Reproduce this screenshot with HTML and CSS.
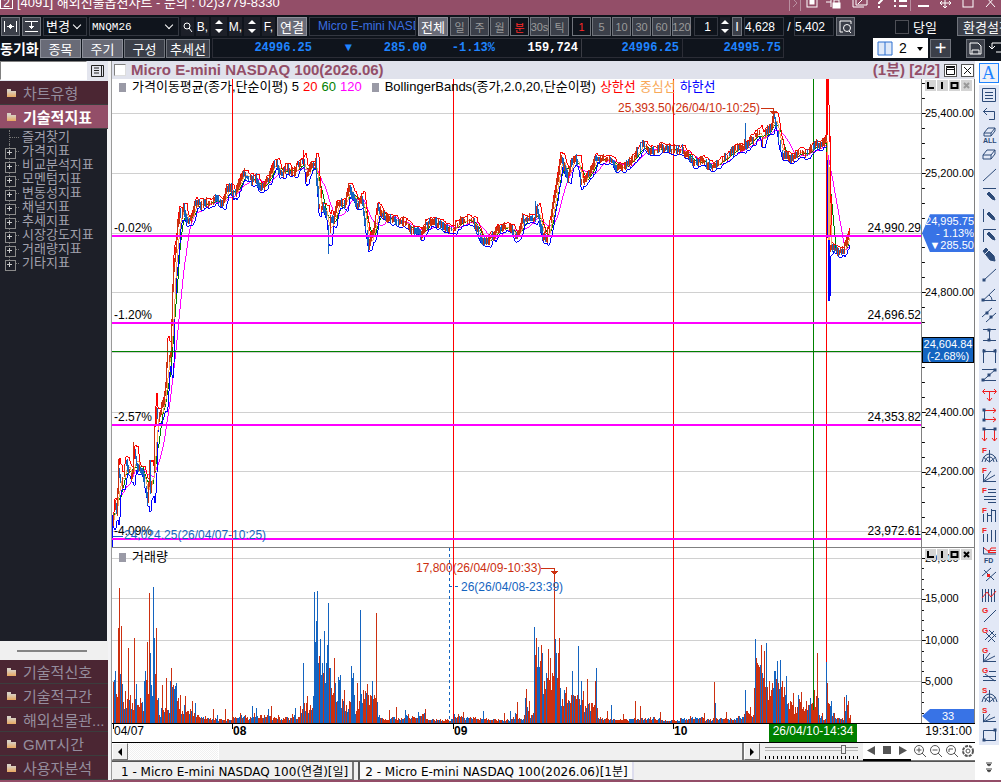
FILE: index.html
```html
<!DOCTYPE html>
<html lang="ko">
<head>
<meta charset="utf-8">
<title>해외선물옵션차트</title>
<link rel="stylesheet" href="styles.css">
</head>
<body>

<header class="titlebar">
  <span class="badge">2</span>
  <span class="title-text">[4091] 해외선물옵션차트 - 문의 : 02)3779-8330</span>
  <svg class="title-icons" width="216" height="16" viewBox="0 0 216 16">
    <path d="M4.500 0v11M15.500 0v11" class="dim"/>
    <path d="M8 -1l4 4-4 4" class="dim"/>
    <rect x="22" y="-3" width="10" height="10"/><rect x="25" y="0" width="4" height="4" class="fill"/>
    <path d="M46 -2v9M46 2h-5M49 3v-3h5v3"/><rect x="48" y="3" width="7" height="5" class="fill"/>
    <path d="M68 -3v10h11M71 -4h11v9h-11zM73 4l5-5"/>
    <path d="M91 0c0-5 7-4 6 0l-3 3v1M94 6v2" class="bold"/>
    <path d="M109 1h2M109 6h2M114 1h8M114 6h8" class="bold"/>
    <path d="M125.500 0v11" class="dim"/>
    <path d="M133 6h11" class="bold"/>
    <path d="M160 -4v11M155 3h11M157 1l-2 2 2 2M164 1l2 2-2 2M158 6l2 2 2-2"/>
    <rect x="178" y="-3" width="10" height="10"/>
    <path d="M201 -3l9 10M210 -3l-9 10"/>
  </svg>
</header>

<nav class="toolbar">
  <button class="btn sq" aria-label="폭"><svg width="15" height="15" viewBox="0 0 15 15"><path d="M1.500 2v11M13.500 2v11M4 7.500h7M7.500 5v5M6.500 6v3M8.500 6v3"/></svg></button>
  <button class="btn sq" aria-label="높이"><svg width="15" height="15" viewBox="0 0 15 15"><path d="M1 2.500h13M1 12.500h13M7.500 3v7M5 7.500h5M6 8.500h3"/></svg></button>
  <span class="pick w-change"><select aria-label="변경"><option>변경</option></select></span>
  <span class="pick w-code"><select class="mono" aria-label="종목코드"><option>MNQM26</option></select></span>
  <button class="flat" aria-label="검색"><svg width="12" height="12" viewBox="0 0 12 12"><circle cx="5" cy="5" r="3"/><path d="M7 7l3 4"/></svg></button>
  <button class="flat">B,</button>
  <button class="flat spin" aria-label="B 이동"><i class="up"></i><i class="down"></i></button>
  <button class="flat">M,</button>
  <button class="flat spin" aria-label="M 이동"><i class="up"></i><i class="down"></i></button>
  <button class="flat">F,</button>
  <button class="btn lit w-link">연결</button>
  <span class="field name">Micro E-mini NASDAQ</span>
  <button class="btn lit w-link">전체</button>
  <div class="group">
    <button class="btn per">일</button>
    <button class="btn per">주</button>
    <button class="btn per">월</button>
    <button class="btn per on">분</button>
    <button class="btn per">30s</button>
    <button class="btn per">틱</button>
  </div>
  <div class="group">
    <button class="btn per on">1</button>
    <button class="btn per">5</button>
    <button class="btn per">10</button>
    <button class="btn per">30</button>
    <button class="btn per">60</button>
    <button class="btn per">120</button>
  </div>
  <input class="field w-unit" value="1" aria-label="분 단위">
  <button class="flat spin narrow" aria-label="단위 조절"><i class="up"></i><i class="down"></i></button>
  <button class="btn bar" aria-label="구분">I</button>
  <input class="field w-count" value="4,628" aria-label="표시 개수">
  <span class="slash">/</span>
  <input class="field w-count" value="5,402" aria-label="전체 개수">
  <button class="btn sq" aria-label="조회"><svg width="15" height="15" viewBox="0 0 15 15"><path d="M5 13H2V2h11v3"/><circle cx="9" cy="9" r="3.500"/><path d="M11 12l2 2"/></svg></button>
  <label class="today"><input type="checkbox">당일</label>
  <button class="btn w-env">환경설정</button>
</nav>

<div class="toolbar second">
  <b class="sync">동기화</b>
  <div class="modes">
    <button class="btn lit">종목</button>
    <button class="btn lit">주기</button>
    <button class="btn">구성</button>
    <button class="btn">추세선</button>
  </div>
  <div class="quote">
    <span class="q-last">24996.25</span>
    <span class="q-dir">▼</span>
    <span class="q-diff">285.00</span>
    <span class="q-rate">-1.13%</span>
    <span class="q-vol">159,724</span>
    <span class="q-ask">24996.25</span>
    <span class="q-bid">24995.75</span>
  </div>
  <span class="layout-pick">
    <svg width="16" height="15" viewBox="0 0 16 15"><path d="M1 1h14v13H1zM8 1v13"/></svg>
    <select aria-label="화면 분할"><option>2</option></select>
  </span>
  <button class="btn add">+</button>
  <button class="btn sq save" aria-label="저장"><svg width="15" height="15" viewBox="0 0 15 15"><path d="M2 2h8l3 3v8H2zM4 13V9h7v4"/></svg></button>
  <button class="flat swap" aria-label="불러오기"><svg width="14" height="14" viewBox="0 0 14 14"><path d="M3 2v6M0 5l3 3 3-3M3 2h11M7 11h7"/></svg></button>
</div>

<main class="work">
  <aside class="side">
    <div class="find">
      <input type="text" aria-label="지표 검색">
      <button aria-label="목록"><svg width="13" height="12" viewBox="0 0 13 12"><path d="M.5.5h12v11H.5zM3 3h5M3 5.500h5M3 8h5M10.500 1v10"/></svg></button>
    </div>
    <button class="fold">차트유형</button>
    <button class="fold active">기술적지표</button>
    <ul class="tree">
      <li class="leaf">즐겨찾기</li>
      <li>가격지표</li>
      <li>비교분석지표</li>
      <li>모멘텀지표</li>
      <li>변동성지표</li>
      <li>채널지표</li>
      <li>추세지표</li>
      <li>시장강도지표</li>
      <li>거래량지표</li>
      <li>기타지표</li>
    </ul>
    <div class="splitter"></div>
    <button class="fold">기술적신호</button>
    <button class="fold">기술적구간</button>
    <button class="fold">해외선물관...</button>
    <button class="fold">GMT시간</button>
    <button class="fold">사용자분석</button>
  </aside>

  <section class="chart">
    <div class="chart-head">
      <input type="checkbox" aria-label="차트 선택">
      <h1>Micro E-mini NASDAQ 100(2026.06)</h1>
      <span class="page">(1분) [2/2]</span>
      <button aria-label="최대화"><svg width="13" height="13" viewBox="0 0 13 13"><path d="M2.500 3.500h8v7h-8zM2 5.500h9M2 2.500h9"/></svg></button>
      <button aria-label="닫기"><svg width="13" height="13" viewBox="0 0 13 13"><path d="M3 3l7 7M10 3l-7 7"/></svg></button>
    </div>

    <div class="panes">
      <div class="plot" id="plot">
        <svg id="canvas" viewBox="112 79 809 644" preserveAspectRatio="none"></svg>
        <div class="legend price-legend">
          <i></i><span>가격이동평균(종가,단순이평)</span>
          <span>5</span><span class="c-up">20</span><span class="c-green">60</span><span class="c-mag">120</span>
          <i class="second-key"></i><span>BollingerBands(종가,2.0,20,단순이평)</span>
          <span class="c-up">상한선</span><span class="c-mid">중심선</span><span class="c-low">하한선</span>
        </div>
        <div class="legend vol-legend"><i></i><span>거래량</span></div>
      </div>
      <div class="axis" id="axis">
        <svg id="ticks" viewBox="0 79 54 644" preserveAspectRatio="none"></svg>
        <div class="pane-btns top">
          <button aria-label="축"><svg width="11" height="11" viewBox="0 0 11 11"><path d="M3 2v6h6"/></svg></button>
          <button aria-label="구분"><svg width="11" height="11" viewBox="0 0 11 11"><path d="M5 2v7"/></svg></button>
          <button aria-label="확대"><svg width="11" height="11" viewBox="0 0 11 11"><path d="M2.500 3h6v5h-6z"/></svg></button>
          <button class="off" aria-label="제거"><svg width="11" height="11" viewBox="0 0 11 11"><path d="M3 3l5 5M8 3L3 8"/></svg></button>
        </div>
        <div class="pane-btns bottom">
          <button aria-label="축"><svg width="11" height="11" viewBox="0 0 11 11"><path d="M3 2v6h6"/></svg></button>
          <button aria-label="구분"><svg width="11" height="11" viewBox="0 0 11 11"><path d="M5 2v7"/></svg></button>
          <button aria-label="확대"><svg width="11" height="11" viewBox="0 0 11 11"><path d="M2.500 3h6v5h-6z"/></svg></button>
          <button aria-label="제거"><svg width="11" height="11" viewBox="0 0 11 11"><path d="M3 3l5 5M8 3L3 8"/></svg></button>
        </div>
        <div class="tag now">24,995.75<br>- 1.13%<br>▼285.50</div>
        <div class="tag cursor">24,604.84<br>(-2.68%)</div>
        <div class="tag vol">33</div>
      </div>
    </div>

    <div class="dates" id="dates">
      <span class="clock">19:31:00</span>
    </div>

    <div class="scroll">
      <button class="step" aria-label="왼쪽"><i class="left"></i></button>
      <div class="track"></div>
      <div class="thumb"></div>
      <button class="step" aria-label="오른쪽"><i class="right"></i></button>
      <div class="zoom"><input type="range" min="0" max="100" value="86" aria-label="배율"></div>
      <svg class="play" width="48" height="18" viewBox="0 0 48 18"><path d="M12 3v9L4 7.500zM20 3h8v8h-8zM36 3v9l8-4.500z"/><path class="base" d="M0 16h48v2H0z"/></svg>
      <svg class="lens" width="64" height="18" viewBox="0 0 64 18">
        <g><circle cx="8" cy="7" r="4.500"/><path d="M11 10l4 4M5.500 7h5M8 4.500v5"/></g>
        <g><circle cx="24" cy="7" r="4.500"/><path d="M27 10l4 4M21.500 7h5"/></g>
        <g><circle cx="40" cy="7" r="4.500"/><path d="M43 10l4 4M38 9v-3h4"/></g>
        <circle cx="57" cy="8" r="2"/><circle cx="57" cy="8" r="5" class="cog"/>
      </svg>
    </div>

    <div class="tabs">
      <button>1 - Micro E-mini NASDAQ 100(연결)[일]</button>
      <button class="current">2 - Micro E-mini NASDAQ 100(2026.06)[1분]</button>
    </div>
  </section>

  <aside class="tools">
    <button class="text-tool">A</button>
    <div class="tool-list" id="tools"></div>
    <button class="more" aria-label="더보기"><svg width="12" height="12" viewBox="0 0 12 12"><path d="M4 2.500h4L6 4zM4 8.500h4L6 10zM3 1h6M3 7h6"/></svg></button>
  </aside>
</main>
<footer class="foot"></footer>

<script src="chart.js"></script>
</body>
</html>
```

FILE: styles.css
```css
* {
  box-sizing: border-box;
}

body {
  margin: 0;
  height: 100vh;
  display: flex;
  flex-direction: column;
  overflow: hidden;
  background: #0f141c;
  font: 12px "Liberation Sans", "Noto Sans CJK KR", sans-serif;
}

button, input, select {
  font: inherit;
  color: inherit;
  margin: 0;
  padding: 0;
  border: 0;
  border-radius: 0;
  background: none;
}

button {
  display: flex;
  align-items: center;
  justify-content: center;
  white-space: nowrap;
}

svg {
  fill: none;
  stroke: currentColor;
  flex: none;
}

/* title bar */
.titlebar {
  height: 15px;
  flex: none;
  display: flex;
  align-items: flex-start;
  overflow: hidden;
  background: #934e68;
  color: #fff;
}

.badge {
  width: 13px;
  height: 9px;
  border: 1px solid #fff;
  border-top: 0;
  font-size: 12px;
  line-height: 6px;
  text-align: center;
}

.title-text {
  margin-left: 4px;
  font-size: 13px;
  line-height: 6px;
  white-space: nowrap;
}

.title-icons {
  margin-left: auto;
  stroke-width: 1;
}

.title-icons .dim { stroke: #b98fa0; }
.title-icons .bold { stroke-width: 2; }
.title-icons .fill { fill: #fff; }

/* toolbars */
.toolbar {
  height: 23px;
  flex: none;
  display: flex;
  align-items: center;
  gap: 2px;
  padding-left: 1px;
  overflow: hidden;
  color: #fff;
  white-space: nowrap;
}

.toolbar > * { flex: none; }

.btn {
  height: 19px;
  border: 1px solid #70747c;
  background: #3b3f49;
  color: #fff;
  font-size: 13px;
}

.btn.lit {
  background: #696b77;
  border-color: #8d909a;
}

.sq { width: 19px; }

.flat {
  width: 13px;
  height: 19px;
  background: #1d2029;
}

.spin {
  width: 16px;
  flex-direction: column;
  gap: 5px;
}

.spin.narrow { width: 10px; }

.spin i {
  border: 4px solid transparent;
  border-top: 0;
  border-bottom-color: #fff;
}

.spin i.down { transform: rotate(180deg); }

.pick {
  position: relative;
  height: 19px;
  border: 1px solid #343841;
}

.pick select {
  width: 100%;
  height: 17px;
  padding-left: 2px;
  appearance: none;
  font-size: 13px;
}

.pick select.mono { font: 11px "Liberation Mono", monospace; }

.pick::after {
  content: "";
  position: absolute;
  right: 6px;
  top: 4px;
  width: 5px;
  height: 5px;
  border: solid #fff;
  border-width: 0 1px 1px 0;
  transform: rotate(45deg);
}

.w-change { width: 44px; }
.w-code { width: 90px; }
.w-link { width: 30px; }

.field {
  height: 19px;
  border: 1px solid #343841;
  line-height: 17px;
  color: #fff;
}

.name {
  width: 107px;
  padding: 0 3px 0 8px;
  overflow: hidden;
  color: #3a6fe0;
}

.group {
  display: flex;
  gap: 1px;
  margin-right: 1px;
}

.per {
  width: 19px;
  color: #9a9a9a;
  font-size: 11px;
}

.per.on {
  background: #0f141c;
  color: #ff2828;
}

.w-unit {
  width: 24px;
  padding-right: 6px;
  text-align: right;
}

.bar { width: 10px; }
.w-count { width: 40px; }
.slash { width: 6px; text-align: center; }

.today {
  display: flex;
  align-items: center;
  gap: 4px;
  margin: 0 18px 0 38px;
  font-size: 13px;
}

.today input {
  width: 14px;
  height: 14px;
  appearance: none;
  border: 1px solid #4d4f56;
}

.w-env {
  width: 60px;
}

.second {
  padding-left: 0;
  padding-bottom: 3px;
}

.sync {
  width: 38px;
  font-size: 14px;
}

.modes {
  display: grid;
  grid-template-columns: 41px 41px 41px 44px;
  gap: 1px;
}

.quote {
  width: 572px;
  height: 20px;
  display: grid;
  grid-template-columns: 99px 40px 75px 68px 87px 101px 1fr;
  border: 1px solid #2b2d36;
  font: bold 12px/18px "Liberation Mono", monospace;
  color: #1f84ff;
  text-align: right;
}

.q-vol {
  padding-right: 3px;
  color: #fff;
  border-right: 1px solid #3a3c44;
}

.q-ask {
  padding-right: 3px;
  border-right: 1px solid #2b2d36;
}

.q-bid { padding-right: 2px; }

.layout-pick {
  width: 55px;
  height: 20px;
  margin-left: 87px;
  padding-left: 4px;
  display: flex;
  align-items: center;
  gap: 4px;
  background: #fff;
  color: #000;
  position: relative;
}

.layout-pick svg { stroke: #2b6fd0; fill: #dfe9f8; }

.layout-pick select {
  flex: 1;
  appearance: none;
  font-size: 14px;
  padding-left: 2px;
}

.layout-pick::after {
  content: "";
  position: absolute;
  right: 5px;
  top: 9px;
  border: 3px solid transparent;
  border-top: 4px solid #000;
  border-bottom: 0;
}

.add {
  width: 21px;
  font-size: 20px;
}

.save { margin-left: 13px; }
.swap { background: none; margin-left: 2px; }

/* work area */
.work {
  flex: 1;
  min-height: 0;
  display: grid;
  grid-template-columns: 112px 1fr 26px;
  background: #fff;
}

.foot {
  height: 2px;
  flex: none;
  background: #934e68;
}

/* indicator list */
.side {
  display: flex;
  flex-direction: column;
  padding-right: 3px;
  border-right: 1px solid #9a9a9a;
  background: #f3f3f5;
}

.find {
  height: 20px;
  flex: none;
  display: flex;
  background: #e3e5ee;
}

.find input {
  width: 87px;
  height: 19px;
  background: #fff;
  border: 1px solid #808080;
  border-right-color: #fff;
  border-bottom-color: #fff;
}

.find button {
  flex: 1;
  color: #222;
}

.fold {
  position: relative;
  height: 24px;
  flex: none;
  justify-content: flex-start;
  padding-left: 23px;
  background: #4b2633;
  border-bottom: 1px solid #3b3d3d;
  color: #958d9d;
  font-size: 15px;
}

.fold::before {
  content: "";
  position: absolute;
  left: 7px;
  top: 8px;
  width: 9px;
  height: 8px;
  background: linear-gradient(90deg, #d8d0c4 50%, transparent 50%) 0 0 / 9px 2px no-repeat,
    linear-gradient(#d8d0c4, #e8a860) 0 2px / 9px 6px no-repeat;
}

.fold.active {
  background: #934e68;
  color: #fff;
  font-weight: bold;
}

.tree {
  flex: 1;
  margin: 0 1px 0 0;
  padding: 1px 0 0 9px;
  list-style: none;
  background: #1d1f28;
  color: #a2a2ae;
  font-size: 13px;
  line-height: 14px;
}

.tree li {
  position: relative;
  height: 14px;
  padding-left: 12px;
  border-left: 1px dotted #777;
  white-space: nowrap;
}

.tree li::after {
  content: "";
  position: absolute;
  left: 0;
  top: 7px;
  width: 9px;
  border-top: 1px dotted #777;
}

.tree li::before {
  content: "";
  position: absolute;
  z-index: 1;
  left: -5px;
  top: 4px;
  width: 9px;
  height: 9px;
  border: 1px solid #8a8a8a;
  background: linear-gradient(#ccc, #ccc) 3px 1px / 1px 5px no-repeat,
    linear-gradient(#ccc, #ccc) 1px 3px / 5px 1px no-repeat, #1d1f28;
}

.tree .leaf::before { display: none; }

.splitter {
  height: 19px;
  flex: none;
  padding: 9px 21px 0 17px;
  background: #f0f0f0;
}

.splitter::before {
  content: "";
  display: block;
  height: 2px;
  background: #858585;
}

/* chart */
.chart {
  min-width: 0;
  display: flex;
  flex-direction: column;
}

.chart-head {
  height: 18px;
  flex: none;
  display: flex;
  align-items: center;
  gap: 4px;
  padding: 0 1px 0 2px;
  background: #e0e2ec;
  color: #934e68;
}

.chart-head input {
  width: 12px;
  height: 12px;
  appearance: none;
  background: #fff;
  border: 1px solid #808080;
  border-right-color: #ddd;
  border-bottom-color: #ddd;
}

.chart-head h1 {
  margin: 0 auto 0 1px;
  font-size: 15px;
  line-height: 18px;
}

.chart-head .page {
  font-size: 15px;
  font-weight: bold;
  line-height: 18px;
}

.chart-head button {
  width: 13px;
  height: 13px;
  background: #fff;
  color: #111;
  border: 1px solid #555;
}

.panes {
  flex: 1;
  min-height: 0;
  display: grid;
  grid-template-columns: 1fr 54px;
}

.plot, .axis {
  position: relative;
  overflow: hidden;
}

.axis {
  border-left: 1px solid #808080;
  border-right: 1px solid #808080;
}

.plot > svg, .axis > svg {
  position: absolute;
  width: 100%;
  height: 100%;
  shape-rendering: crispEdges;
}

.mark {
  position: absolute;
  line-height: 12px;
  margin-top: -6px;
  white-space: nowrap;
}

.mark.end { right: 0; }
.mark.hi { color: #cc3010; }
.mark.lo { color: #1464c0; }

.mark.value {
  left: 3px;
  font-size: 11px;
}

.legend {
  position: absolute;
  left: 7px;
  display: flex;
  gap: 4px;
  font-size: 13px;
  line-height: 16px;
  white-space: nowrap;
}

.price-legend { top: 0; }
.vol-legend { top: 73%; }

.legend i {
  width: 7px;
  height: 9px;
  margin: 4px 2px 0 0;
  background: #9a9aa6;
}

.legend .second-key { margin-left: 6px; }

.c-up { color: #f00; }
.c-green { color: #008000; }
.c-mag { color: #f0f; }
.c-mid { color: #f8a858; }
.c-low { color: #00f; }

.pane-btns {
  position: absolute;
  left: 3px;
  display: flex;
  gap: 1px;
}

.pane-btns.top { top: 1px; }
.pane-btns.bottom { top: 73%; }

.pane-btns button {
  width: 11px;
  height: 11px;
  background: #d4d4d4;
}

.pane-btns svg { stroke-width: 2; }
.pane-btns .off { color: #999; }

.tag {
  position: absolute;
  left: 0;
  right: 0;
  color: #fff;
  background: #3873e6;
  font-size: 11px;
  line-height: 12px;
  text-align: center;
}

.tag.now {
  top: 21%;
  padding: 1px 0;
  text-align: right;
  clip-path: polygon(8px 0, 100% 0, 100% 100%, 8px 100%, 0 50%);
}

.tag.cursor {
  top: 40%;
  border: 1px solid #000;
  background: #1464c0;
}

.tag.vol {
  bottom: 0;
  line-height: 14px;
  clip-path: polygon(8px 0, 100% 0, 100% 100%, 8px 100%, 0 50%);
}

.dates {
  position: relative;
  height: 20px;
  flex: none;
  border: solid #000;
  border-width: 1px 0;
  overflow: hidden;
}

.dates span {
  position: absolute;
  top: 0;
  line-height: 14px;
}

.dates .day { font-weight: bold; border-left: 1px solid #000; height: 5px; }
.dates .day.first { font-weight: normal; }
.dates .clock { right: 3px; }

.dates .here {
  width: 88px;
  height: 18px;
  background: #008000;
  color: #fff;
  text-align: center;
}

.scroll {
  height: 18px;
  flex: none;
  display: flex;
  background: #fff;
  border-bottom: 1px solid #777;
}

.step {
  width: 16px;
  background: #f0f0f0;
  border: 1px solid #fff;
  border-right-color: #777;
  border-bottom-color: #777;
}

.step i {
  border: 4px solid transparent;
}

.step .left { border-left: 0; border-right-color: #000; }
.step .right { border-right: 0; border-left-color: #000; }

.track {
  flex: 90;
  background: repeating-conic-gradient(#f0f0f0 0 25%, #fff 0 50%) 0 0 / 2px 2px;
}

.thumb {
  flex: 525;
  background: #f0f0f0;
  border-left: 1px solid #fff;
  border-right: 2px solid #777;
}

.zoom {
  width: 103px;
  padding: 1px 5px 0;
  background: #f0f0f0;
}

.zoom input {
  display: block;
  width: 100%;
  height: 15px;
  appearance: none;
  background: linear-gradient(#888, #888) 0 3px / 100% 1px no-repeat,
    linear-gradient(#bbb, #bbb) 0 6px / 100% 1px no-repeat,
    repeating-linear-gradient(90deg, #000 0 1px, transparent 1px 4px) 0 12px / 100% 3px no-repeat;
}

.zoom input::-webkit-slider-thumb {
  appearance: none;
  width: 5px;
  height: 9px;
  margin-bottom: 5px;
  background: #f0f0f0;
  border: 1px solid #666;
}

.play {
  fill: #555;
  stroke: none;
}

.play .base { fill: #000; }

.lens {
  stroke: #555;
  stroke-width: 1;
}

.cog {
  stroke-width: 2;
  stroke-dasharray: 3 1;
}

.tabs {
  height: 19px;
  flex: none;
  display: flex;
  gap: 4px;
  padding-left: 1px;
  border-top: 1px solid #555;
  background: #f0f0f0;
}

.tabs button {
  padding: 0 4px 0 8px;
  border: 1px solid #777;
  border-width: 0 2px 1px 0;
  font: 12px "DejaVu Sans", "Noto Sans CJK KR", sans-serif;
}

.tabs .current {
  padding-left: 5px;
  background: #fafafa;
  border-left: 2px solid #555;
  border-right-color: #dde;
}

/* drawing tools */
.tools {
  display: flex;
  flex-direction: column;
  align-items: center;
  padding: 2px 1px 0 2px;
}

.text-tool {
  width: 20px;
  height: 20px;
  flex: none;
  border: 1px solid #1f84ff;
  background: #eef1f8;
  color: #1f84ff;
  font: 18px "Liberation Serif", serif;
}

.tool-list {
  margin-top: 2px;
  background: #e2e8f6;
}

.tool-list button {
  width: 20px;
  height: 20px;
  color: #2c4a78;
}

.tool-list svg text {
  font: bold 7px "Liberation Sans", sans-serif;
  stroke: none;
  fill: #2c4a78;
}

.tool-list .r { stroke: #f02020; }
.tool-list .f { fill: #2c4a78; }
.tool-list svg text.r { fill: #f02020; stroke: none; font-size: 8px; }

.more {
  margin: auto 0 6px;
  color: #444;
}
```

FILE: chart.js
```js
const LEFT = 112, TOP = 79, W = 809, H = 644, BASE = 723;
const RED = '#cc3010', BLUE = '#1464c0';

// small seeded generator so the series is the same on every load
let seed = 7;
function rnd() {
  seed = (seed * 16807) % 2147483647;
  return seed / 2147483647;
}

// turning points of the price, x / y
const turns = [
  112,525, 114,505, 116,512, 118,470, 121,485, 125,462, 128,470, 131,478, 134,452, 137,468, 141,470, 145,488, 147,503,
  149,465, 150,490, 153,470, 154,430, 156,412, 158,420, 160,412, 163,402, 165,385, 167,345, 168,360, 170,355, 172,290,
  173,270, 175,250, 177,225, 179,212, 181,216, 183,206, 185,218, 187,222, 190,220, 193,208, 195,203, 200,205, 213,200,
  222,204, 226,189, 230,190, 234,195, 238,183, 243,174, 247,177, 251,181, 255,179, 260,188, 264,184, 268,178, 272,166,
  275,163, 278,170, 282,173, 286,167, 290,172, 294,173, 297,165, 301,163, 303,162, 305,180, 308,170, 311,165, 315,162,
  316,180, 318,205, 322,208, 326,218, 328,240, 330,220, 333,222, 336,205, 340,203, 344,205, 348,188, 352,197, 356,205,
  359,203, 361,198, 363,215, 366,235, 368,245, 371,235, 373,230, 377,208, 381,214, 386,217, 390,219, 398,222, 405,222,
  410,230, 415,230, 420,235, 425,225, 432,222, 438,224, 445,228, 453,229, 460,222, 466,219, 473,222, 480,238, 485,243,
  490,238, 497,230, 505,228, 510,227, 514,237, 518,232, 522,220, 528,219, 534,220, 536,210, 539,222, 542,237, 546,238,
  549,225, 552,208, 554,195, 558,170, 560,158, 564,168, 567,178, 570,163, 575,159, 578,165, 580,182, 585,180, 590,170,
  595,158, 600,160, 610,159, 615,168, 622,167, 628,165, 635,155, 642,145, 648,150, 655,150, 662,147, 668,149, 675,150,
  682,150, 688,157, 693,163, 700,160, 706,164, 712,168, 718,163, 722,158, 728,155, 735,149, 742,148, 748,142, 752,140,
  756,133, 758,130, 761,143, 766,130, 770,128, 773,116, 775,122, 778,140, 782,155, 788,158, 793,158, 798,152, 805,155,
  810,148, 814,145, 818,148, 822,143, 825,140, 826,138, 827,240, 829,250, 832,248, 838,252, 843,249, 846,240, 849,232, 850,235
];

// volume: x, height; a minus sign is a falling bar
const volume = [
  113,41, 114,-43, 115,-52, 116,29, 117,26, 118,95, 119,135, 120,-49, 121,97, 122,-39, 123,21, 125,32, 127,24, 128,75,
  129,-23, 130,28, 132,20, 134,85, 135,-24, 136,-39, 138,18, 140,25, 142,-21, 144,-42, 145,-52, 146,43, 147,81, 148,29,
  149,130, 150,-70, 151,-38, 152,-27, 153,-136, 154,-85, 155,49, 156,95, 157,23, 158,-25, 159,8, 161,-15, 162,38, 163,13,
  165,15, 166,45, 167,13, 170,-42, 171,55, 172,-36, 173,38, 175,-37, 176,-40, 178,25, 180,28, 182,12, 184,-18, 185,27,
  187,12, 190,14, 192,22, 194,10, 195,-20, 198,8, 205,7, 210,5, 213,14, 215,5, 217,-8, 220,4, 225,14, 228,4, 232,12,
  235,6, 240,10, 245,8, 250,6, 252,-17, 254,10, 256,-15, 260,8, 267,8, 268,-14, 270,7, 271,17, 274,6, 278,8, 285,6,
  292,9, 295,-15, 298,6, 300,17, 302,14, 303,-60, 304,20, 307,27, 310,18, 312,15, 313,-27, 314,-131, 315,-81, 316,-102,
  317,-132, 318,-60, 319,67, 320,-84, 321,-48, 322,-60, 323,50, 324,-92, 325,-40, 326,-60, 327,-78, 328,-120, 329,55,
  330,-55, 331,35, 333,30, 334,65, 335,-40, 337,-22, 338,-46, 340,-48, 342,24, 344,33, 346,18, 349,22, 351,-57, 352,-45,
  353,-50, 354,-28, 356,12, 357,40, 359,22, 360,-113, 361,-29, 362,-20, 363,33, 365,32, 367,39, 370,28, 372,-42, 374,28,
  375,25, 376,110, 377,-21, 379,-8, 382,5, 389,13, 392,6, 396,16, 398,5, 404,5, 405,-13, 408,9, 412,7, 418,-11, 425,14,
  427,4, 440,4, 453,4, 454,-9, 463,11, 470,6, 483,-12, 486,5, 495,4, 504,10, 507,4, 510,-12, 513,6, 515,-10, 517,21,
  519,5, 524,8, 525,-25, 526,34, 527,-16, 529,22, 531,8, 533,10, 534,-96, 535,68, 536,85, 537,-56, 538,-76, 539,-56,
  540,62, 541,78, 542,-70, 544,42, 546,-50, 547,45, 548,74, 549,43, 550,65, 552,50, 553,47, 554,151, 555,-84, 556,-70,
  557,45, 558,70, 559,85, 560,-35, 562,24, 564,-33, 566,36, 568,23, 571,28, 572,-52, 573,28, 575,27, 577,28, 578,-77,
  579,24, 581,-42, 583,32, 585,17, 587,44, 589,20, 592,20, 594,18, 595,42, 596,-55, 597,15, 600,6, 606,5, 607,12, 608,4,
  611,-18, 613,4, 623,9, 625,4, 634,5, 635,22, 637,4, 640,17, 642,5, 650,6, 660,11, 662,3, 673,3, 680,5, 690,7, 704,10,
  708,4, 713,5, 714,41, 715,-20, 716,5, 726,11, 730,5, 738,7, 744,9, 745,-33, 746,12, 750,16, 753,8, 754,35, 755,-84,
  756,65, 757,60, 758,58, 760,-58, 761,78, 762,-50, 764,72, 765,36, 766,-80, 767,36, 769,42, 771,33, 772,40, 774,-52,
  775,-52, 777,-62, 778,40, 780,-63, 781,36, 782,42, 784,36, 786,-47, 788,20, 790,22, 793,30, 795,16, 798,-28, 801,31,
  803,16, 806,22, 810,-25, 812,20, 814,33, 816,27, 817,70, 818,-25, 819,8, 822,10, 825,4, 826,-61, 827,40, 828,20,
  831,-22, 834,10, 838,5, 842,5, 844,26, 845,-12, 846,-28, 848,22, 850,8
];

const canvas = document.getElementById('canvas');
const plot = document.getElementById('plot');
const axis = document.getElementById('axis');
const dates = document.getElementById('dates');
let out = '';

function line(x1, y1, x2, y2, color, width = 1, extra = '') {
  return `<path d="M${x1} ${y1}L${x2} ${y2}" stroke="${color}" stroke-width="${width}" ${extra}/>`;
}

function curve(points, color) {
  return `<polyline points="${points.map(p => p.join(',')).join(' ')}" stroke="${color}"/>`;
}

function mark(parent, text, x, y, cls) {
  const el = document.createElement('span');
  el.className = 'mark ' + cls;
  el.textContent = text;
  if (x !== null) el.style.left = (x - LEFT) / W * 100 + '%';
  el.style.top = (y - TOP) / H * 100 + '%';
  parent.appendChild(el);
}

// grid
const priceRows = [113, 173, 233, 292, 352, 412, 471, 531];
const volRows = [558, 598, 640, 681];
[...priceRows, ...volRows].forEach(y => { out += line(112, y + .5, 921, y + .5, '#d0d0d0'); });
out += line(112, 547.5, 921, 547.5, '#808080');
[232, 453, 673, 826].forEach(x => { out += line(x + .5, 79, x + .5, BASE, '#f00'); });
out += line(813.5, 79, 813.5, BASE, '#008000');
out += line(449.5, 548, 449.5, BASE, BLUE, 1, 'stroke-dasharray="3 3"');

// price series, one sample per column
const close = [];
for (let i = 0; i + 3 < turns.length; i += 2) {
  const [x1, y1, x2, y2] = turns.slice(i, i + 4);
  for (let x = x1; x < x2; x++) {
    close.push([x, y1 + (y2 - y1) * (x - x1) / (x2 - x1) + (rnd() - .5) * 4]);
  }
}

function average(n) {
  return close.map(([x], i) => {
    const part = close.slice(Math.max(0, i - n + 1), i + 1).map(p => p[1]);
    const mean = part.reduce((a, b) => a + b) / part.length;
    const dev = Math.sqrt(part.reduce((a, b) => a + (b - mean) ** 2, 0) / part.length);
    return [x, mean, dev];
  });
}

const short = average(4);
const pair = list => list.map(p => [p[0], Math.round(p[1])]);
out += curve(pair(average(19)), '#f0f');
out += curve(pair(average(10)), '#008000');
out += curve(short.map(p => [p[0] + 1, Math.round(Math.min(299, p[1] + 1.6 * p[2] + 3) * (p[1] < 290) + (p[1] >= 290) * (p[1] + 1.6 * p[2] + 3))]), '#00f');
out += curve(short.map(p => [p[0] + 1, Math.round(Math.max(79, p[1] - 1.6 * p[2] - 3))]), '#f00');
out += curve(pair(average(5)).map(p => [p[0] + 1, p[1]]), '#f8a858');
let rise = '', fall = '';
close.forEach(([x, y], i) => {
  const prev = i ? close[i - 1][1] : y;
  if (Math.abs(prev - y) > 60 || rnd() < .12) return;
  const top = Math.min(y, prev) - 1 - rnd() * 4;
  const bar = `M${x + .5} ${top.toFixed(0)}V${(Math.max(y, prev) + 1 + rnd() * 3).toFixed(0)}`;
  if (y + (rnd() - .6) * 6 < prev) rise += bar; else fall += bar;
});
out += `<path d="${rise}" stroke="${RED}"/><path d="${fall}" stroke="${BLUE}"/>`;
// wicks that stand clear of the bands
out += line(118.5, 459, 118.5, 490, RED) + line(133.5, 442, 133.5, 470, RED) + line(328.5, 225, 328.5, 254, BLUE);
out += line(535.5, 201, 535.5, 222, BLUE) + line(745.5, 123, 745.5, 145, BLUE) + line(303.5, 150, 303.5, 165, '#f00');
out += line(112.5, 515, 112.5, 547, '#00f');
// opening gap of the last session
out += line(827.5, 79, 827.5, 104, '#f00', 3) + line(828.5, 240, 828.5, 301, '#00f', 2) + line(829.5, 105, 831.5, 225, '#f00');
out += line(828.5, 165, 829.5, 240, '#f8a858', 2);

// trend levels
[[236, '-0.02%', '24,990.29'], [323, '-1.20%', '24,696.52'], [425, '-2.57%', '24,353.82'], [539, '-4.09%', '23,972.61']]
  .forEach(([y, rate, price]) => {
    out += line(112, y, 921, y, '#f0f', 2);
    mark(plot, rate, 114, y - 8, '');
    mark(plot, price, null, y - 8, 'end');
  });
out += line(112, 351.5, 921, 351.5, '#008000');

// volume bars
let up = '', down = '';
function bar(x, h, falling) {
  const d = `M${x + .5} ${BASE}V${BASE - Math.round(h)}`;
  if (falling) down += d; else up += d;
}
for (let i = 0; i < volume.length; i += 2) {
  const x = volume[i], h = volume[i + 1];
  bar(x, Math.abs(h), h < 0);
  if (i + 3 < volume.length) {
    const low = Math.min(Math.abs(h), Math.abs(volume[i + 3]));
    for (let k = x + 1; k < volume[i + 2]; k++) {
      bar(k, Math.max(2, low * (.55 + rnd() * .45)), rnd() < .45);
    }
  }
}
out += `<path d="${up}" stroke="${RED}"/><path d="${down}" stroke="${BLUE}"/>`;

// high and low callouts
out += `<path d="M761 108.500H773.500V113M541 568.500H554.500V573" stroke="${RED}"/>`;
out += `<path d="M770 111h7l-3.500 4zM551 571h7l-3.500 4z" fill="${RED}" stroke="none"/>`;
out += `<path d="M113 536.500h10M449 586.500h3M455 586.500h3" stroke="${BLUE}"/>`;
canvas.innerHTML = out;
mark(plot, '25,393.50(26/04/10-10:25)', 618, 108, 'hi');
mark(plot, '24,024.25(26/04/07-10:25)', 124, 535, 'lo');
mark(plot, '17,800(26/04/09-10:33)', 416, 568, 'hi');
mark(plot, '26(26/04/08-23:39)', 461, 587, 'lo');

// value axis
let ticks = line(0, 547.5, 54, 547.5, '#808080');
for (let i = 0; i < 31; i++) {
  const y = Math.round(83 + i * 14.95) + .5;
  ticks += line(0, y, i % 4 === 2 ? 4 : 3, y, '#000');
}
for (let i = 0; i < 17; i++) {
  const y = Math.round(558 + i * 10.3) + .5;
  ticks += line(0, y, i % 4 ? 2 : 4, y, '#000');
}
document.getElementById('ticks').innerHTML = ticks;
const labels = {
  113: '25,400.00', 173: '25,200.00', 292: '24,800.00', 412: '24,400.00', 471: '24,200.00', 531: '24,000.00',
  558: '20,000', 598: '15,000', 640: '10,000', 681: '5,000'
};
for (const y in labels) {
  const el = document.createElement('span');
  el.className = 'mark value';
  el.textContent = labels[y];
  el.style.top = (y - TOP) / H * 100 + '%';
  axis.insertBefore(el, axis.querySelector('.pane-btns'));
}

// date axis
[[113, '04/07', 'day first'], [232, '08', 'day'], [453, '09', 'day'], [673, '10', 'day'], [769, '26/04/10-14:34', 'here']]
  .forEach(([x, text, cls]) => {
    const el = document.createElement('span');
    el.className = cls;
    el.textContent = text;
    el.style.left = (x - LEFT) / (W + 54) * 100 + '%';
    dates.appendChild(el);
  });

// drawing tools
const pencil = '<path class="f" d="M4 6l3-3 8 8 1 5-5-1z"/><path d="M6 9l4-4" stroke="#e2e8f6"/>';
const smallPencil = '<path class="f" d="M8 9l2-2 5 5 1 3-3-1z"/>';
const dot = (x, y) => `<rect class="f" x="${x - 1}" y="${y - 1}" width="2" height="2"/>`;
const letter = c => `<text class="r" x="3" y="8">${c}</text>`;
const tools = [
  ['목록', '<path d="M3.500 3.500h13v13h-13zM6 7.500h8M6 10.500h8M6 13.500h8"/>'],
  ['되돌리기', '<path d="M4 6.500h11.500v8H10M8 3L4.500 6.500 8 10"/>'],
  ['전체 지우기', '<path d="M5 8l4-5h7l-4 5zM5 8v3h7l4-5V3M12 8v3"/><text x="4" y="18">ALL</text>'],
  ['지우기', '<path d="M4 10l4-5h8l-4 5zM4 10v4h8l4-5V5M12 10v4"/>'],
  ['직선', '<path d="M4 16L17 4"/>'],
  ['수평선', '<path d="M4 3.500h13"/>' + smallPencil],
  ['수직선', '<path d="M4.500 4v13"/>' + smallPencil],
  ['십자선', '<path d="M4.500 17V4.500H17"/>' + smallPencil],
  ['자유선', pencil],
  ['추세선', '<path d="M5 15L17 4"/>' + dot(5, 15)],
  ['각도선', '<path d="M16 4L4 15.500h13M10 10q3 2 3 5"/>' + dot(4, 15)],
  ['평행선', '<path d="M3 12L13 3M7 17L17 8"/>' + dot(8, 8) + dot(12, 12)],
  ['수직폭', '<path d="M4 4.500h13M4 15.500h13M10.500 4v12"/>' + dot(10, 5) + dot(10, 15)],
  ['수평폭', '<path d="M4.500 4v14M16.500 4v14M4 6.500h13"/>' + dot(5, 6) + dot(16, 6)],
  ['구간', '<path d="M3 4.500h13.500L4 15.500h13"/>' + dot(10, 10) + dot(16, 5) + dot(4, 15)],
  ['아래 확장', '<path class="r" d="M4 6.500h13M10.500 6v10M8 13l2.500 3 2.500-3M6 4L3.500 6.500 6 9M15 4l2.500 2.500L15 9"/>'],
  ['우측 확장', '<path d="M5.500 4v12"/><path class="r" d="M6 5.500h11M6 14.500h11M14 3l3 2.500L14 8M14 12l3 2.500-3 2.500"/>' + dot(5, 5) + dot(5, 15)],
  ['하단 확장', '<path d="M5 4.500h11"/><path class="r" d="M5.500 5v11M15.500 5v11M3 13l2.500 3L8 13M13 13l2.500 3 2.500-3"/>' + dot(5, 4) + dot(16, 4)],
  ['피보나치 아크', letter('F') + '<path d="M3 17q2-8 7.500-8t7.500 8M6 17q1-5 4.500-5t4.500 5M10.500 5v12L4 12M10.500 17L17 12"/>'],
  ['피보나치 팬', letter('F') + '<path d="M4.500 9v7.500H17M4 17L12 6M4 17l12-7"/>'],
  ['피보나치 되돌림', letter('F') + '<path d="M9 4.500h8M9 7.500h8M5 11.500h12M5 14.500h12M9 17.500h8"/>'],
  ['피보나치 확장', letter('F') + '<path d="M4.500 9v8M8.500 8v9M8 10.500h5M12.500 4v13M12 5.500h5M16.500 5v12"/>'],
  ['피보나치 시간', letter('F') + '<path d="M4.500 9v8M8.500 9v8M12.500 5v12M16.500 5v12"/>'],
  ['FD', '<path d="M4.500 2v7H17"/><path class="r" d="M5 3l5 4 2-4h5M9 5.500h8M9 7.500h8"/><text x="5" y="18">FD</text>'],
  ['채널', '<path d="M3 11L12 3M7 16L17 7M5 5l10 10"/><rect x="8" y="9" width="3" height="3" fill="#f02020" stroke="none"/>'],
  ['사이클', '<path d="M3.500 4v13M6.500 4v13M9.500 4v13M12.500 4v13M15.500 4v13"/><path class="r" d="M3 13l5-6 4 5 5-6"/>'],
  ['갠 라인', letter('G') + '<path d="M5 17L17 5"/>'],
  ['갠 그리드', letter('G') + '<path d="M6 15l9-9M9 17l8-8M7 8l9 9M10 5l7 7"/>'],
  ['갠 팬', letter('G') + '<path d="M4.500 9v7.500H17M4 17L11 8M4 17l12-6"/>'],
  ['갠 레벨', letter('G') + '<path d="M10 6.500h7M4 11.500h13M4 15.500h13M6 9l10 7"/>'],
  ['스피드 아크', letter('S') + '<path d="M3 17q2-8 7.500-8t7.500 8M6 17q1-5 4.500-5t4.500 5M10.500 5v12L4 12M10.500 17L17 12"/>'],
  ['스피드 팬', letter('S') + '<path d="M4.500 9v7.500H17M4 17l7-8M4 17l12-5"/>'],
  ['사각형', '<path d="M4.500 5.500h12v10h-12z"/>' + dot(16, 5) + dot(5, 15)]
];
document.getElementById('tools').innerHTML = tools
  .map(([name, art]) => `<button aria-label="${name}"><svg width="20" height="20" viewBox="0 0 20 20">${art}</svg></button>`)
  .join('');
```
